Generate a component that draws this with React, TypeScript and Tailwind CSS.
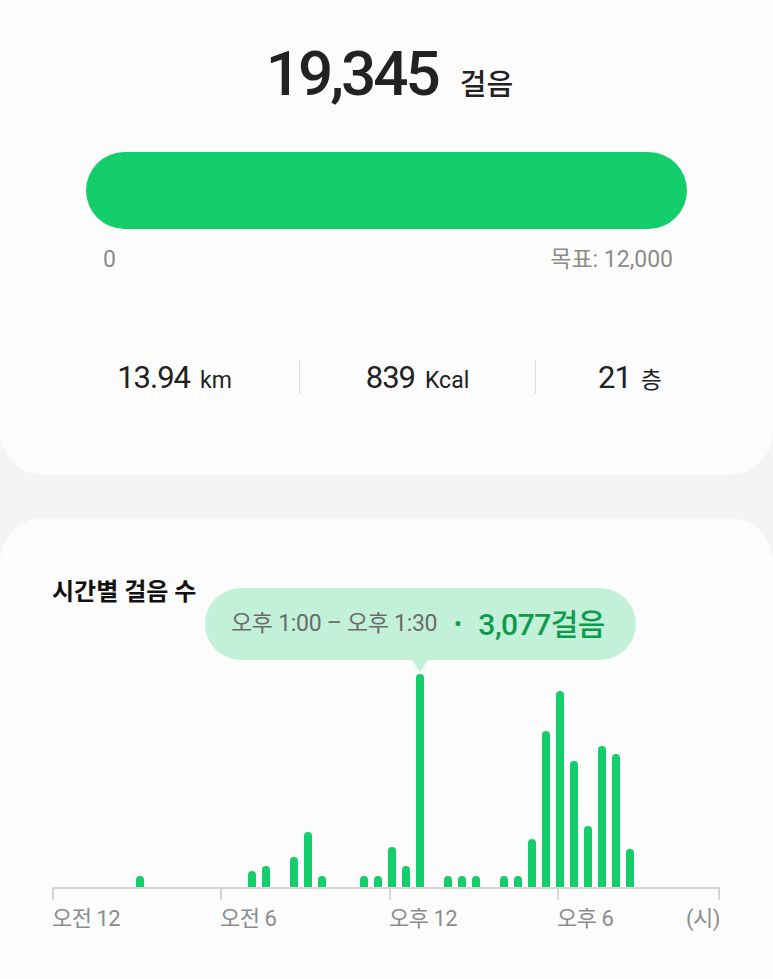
const bars: Record<number, number> = {
  6: 11, 14: 16, 15: 21, 17: 30, 18: 55, 19: 11,
  22: 11, 23: 11, 24: 40, 25: 21, 26: 213,
  28: 11, 29: 11, 30: 11, 32: 11, 33: 11,
  34: 48, 35: 156, 36: 196, 37: 126, 38: 61, 39: 141, 40: 133, 41: 38,
};

const font = { fontFamily: "Roboto, 'Noto Sans CJK KR', sans-serif" };

function Stat({ value, unit, width }: { value: string; unit: string; width: string }) {
  return (
    <div className={`${width} flex items-baseline justify-center gap-[10px]`}>
      <span className="text-[31px] tracking-[-1px] text-[#222]">{value}</span>
      <span className="text-[23px] text-[#222]">{unit}</span>
    </div>
  );
}

export default function App() {
  const slots = Array.from({ length: 48 }, (_, i) => bars[i] ?? 0);

  return (
    <div className="min-h-[979px] w-[773px] overflow-hidden bg-[#f4f4f5]" style={font}>
      {/* 걸음 요약 */}
      <div className="h-[475px] rounded-b-[44px] bg-[#fcfcfd] pt-[38px]">
        <div className="flex items-baseline justify-center gap-[22px] pl-[6px]">
          <span className="text-[62px] font-medium leading-[72px] tracking-[-3px] text-[#222]">19,345</span>
          <span className="text-[29px] font-medium text-[#222]">걸음</span>
        </div>

        <div className="mx-[86px] mt-[42px] h-[77px] rounded-full bg-[#13ce6b]" />
        <div className="ml-[103px] mr-[100px] mt-[14px] flex justify-between text-[23px] text-[#8c8c8c]">
          <span>0</span>
          <span>목표: 12,000</span>
        </div>

        <div className="mt-[77px] flex items-center">
          <Stat value="13.94" unit="km" width="w-[299px] pl-[50px]" />
          <div className="h-[33px] w-[1px] bg-[#dedede]" />
          <Stat value="839" unit="Kcal" width="w-[235px]" />
          <div className="h-[33px] w-[1px] bg-[#dedede]" />
          <Stat value="21" unit="층" width="w-[188px]" />
        </div>
      </div>

      {/* 시간별 걸음 수 */}
      <div className="mt-[43px] h-[500px] rounded-t-[44px] bg-[#fcfcfd] px-[52px] pt-[56px]">
        <div className="relative">
          <h2 className="text-[24px] font-bold text-[#111]">시간별 걸음 수</h2>

          <div className="absolute left-[153px] top-[14px] flex flex-col items-start">
            <div className="flex h-[72px] w-[431px] items-center gap-[17px] rounded-full bg-[#c2f0d8] pl-[26px]">
              <span className="text-[23px] tracking-[-0.3px] text-[#6b6b6b]">오후 1:00 – 오후 1:30</span>
              <span className="text-[20px] font-bold text-[#0f9a4c]">•</span>
              <span className="text-[30px] font-medium tracking-[-0.5px] text-[#0f9a4c]">3,077걸음</span>
            </div>
            <div className="ml-[207px] h-0 w-0 border-x-[8px] border-t-[12px] border-x-transparent border-t-[#c2f0d8]" />
          </div>

          <div className="mt-[64px] flex h-[213px] items-end">
            {slots.map((h, i) => (
              <div key={i} className="flex w-[14px] shrink-0 items-end">
                {h > 0 && <div className="w-[8px] rounded-t-full bg-[#13ce6b]" style={{ height: h }} />}
              </div>
            ))}
          </div>

          <div className="flex w-[668px] border-t-2 border-[#d6d6d6]">
            <div className="h-[11px] w-[168px] border-l-2 border-[#d6d6d6]" />
            <div className="h-[11px] w-[169px] border-l-2 border-[#d6d6d6]" />
            <div className="h-[11px] w-[168px] border-l-2 border-[#d6d6d6]" />
            <div className="h-[11px] w-[163px] border-x-2 border-[#d6d6d6]" />
          </div>

          <div className="mt-[2px] flex w-[668px] text-[22px] tracking-[-0.5px] text-[#8c8c8c]">
            <span className="w-[168px]">오전 12</span>
            <span className="w-[169px]">오전 6</span>
            <span className="w-[168px]">오후 12</span>
            <span className="flex w-[163px] justify-between">
              <span>오후 6</span>
              <span>(시)</span>
            </span>
          </div>
        </div>
      </div>
    </div>
  );
}
